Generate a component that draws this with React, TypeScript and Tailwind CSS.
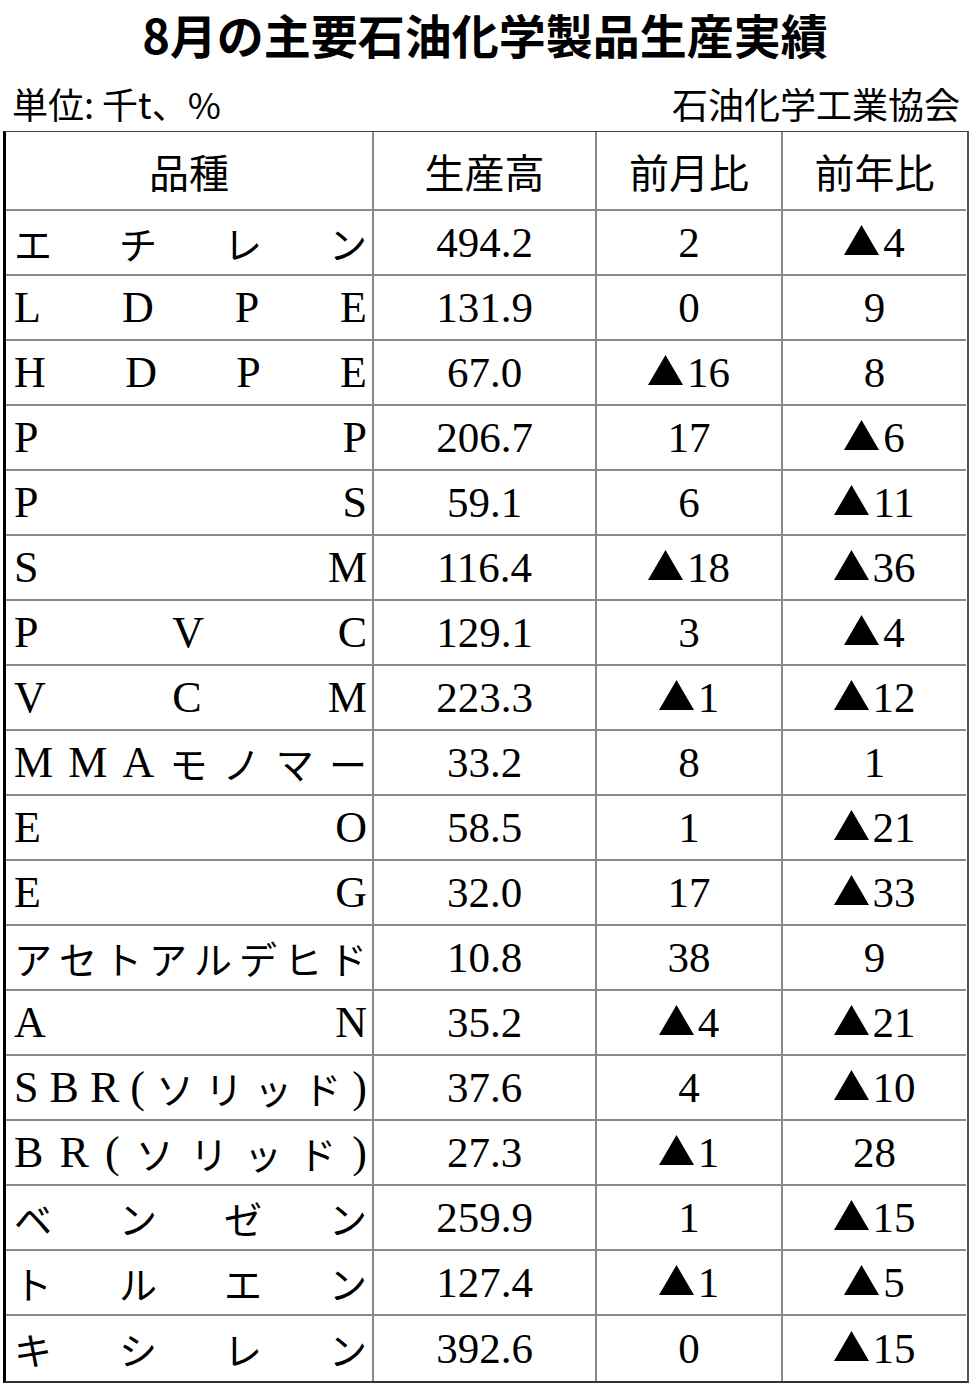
import React from 'react';

const rows: [string[], string, string, string][] = [
    [['エ', 'チ', 'レ', 'ン'], '494.2', '2', '▲4'],
    [['L', 'D', 'P', 'E'], '131.9', '0', '9'],
    [['H', 'D', 'P', 'E'], '67.0', '▲16', '8'],
    [['P', 'P'], '206.7', '17', '▲6'],
    [['P', 'S'], '59.1', '6', '▲11'],
    [['S', 'M'], '116.4', '▲18', '▲36'],
    [['P', 'V', 'C'], '129.1', '3', '▲4'],
    [['V', 'C', 'M'], '223.3', '▲1', '▲12'],
    [['M', 'M', 'A', 'モ', 'ノ', 'マ', 'ー'], '33.2', '8', '1'],
    [['E', 'O'], '58.5', '1', '▲21'],
    [['E', 'G'], '32.0', '17', '▲33'],
    [['ア', 'セ', 'ト', 'ア', 'ル', 'デ', 'ヒ', 'ド'], '10.8', '38', '9'],
    [['A', 'N'], '35.2', '▲4', '▲21'],
    [['S', 'B', 'R', '(', 'ソ', 'リ', 'ッ', 'ド', ')'], '37.6', '4', '▲10'],
    [['B', 'R', '(', 'ソ', 'リ', 'ッ', 'ド', ')'], '27.3', '▲1', '28'],
    [['ベ', 'ン', 'ゼ', 'ン'], '259.9', '1', '▲15'],
    [['ト', 'ル', 'エ', 'ン'], '127.4', '▲1', '▲5'],
    [['キ', 'シ', 'レ', 'ン'], '392.6', '0', '▲15'],
];

const serif = "font-['Liberation_Serif',serif]";
const jp = "font-['Noto_Sans_CJK_JP',sans-serif]";

// 負の値は▲を前につける
const Value = ({ v }: { v: string }) => {
    const neg = v.startsWith('▲');
    const num = neg ? v.slice(1) : v;
    return (
        <span className="inline-flex items-end">
            {neg && (
                <svg width="35" height="30" viewBox="0 0 35 30" className="mr-[4px] mb-[9px]">
                    <polygon points="17.5,0 35,30 0,30" fill="#000" />
                </svg>
            )}
            <span className={`${serif} text-[43px] leading-none`}>{num}</span>
        </span>
    );
};

const App: React.FC = () => {
    return (
        <div className="w-[970px] h-[1383px] bg-white text-black overflow-hidden">
            <h1 className={`text-center ${jp} font-bold text-[47px] leading-[68px] m-0`}>
                8月の主要石油化学製品生産実績
            </h1>
            <div className={`h-[63px] flex items-center justify-between pl-[12px] pr-[10px] ${jp} text-[36px] leading-[44px] pt-[6px]`}>
                <span>単位: 千t、%</span>
                <span>石油化学工業協会</span>
            </div>

            <div className="ml-[3px] w-[966px] border-l-[3px] border-l-black border-t border-t-[#444] border-r-2 border-r-[#555] border-b-2 border-b-[#333] grid grid-cols-[368px_223px_186px_183px]">
                {['品種', '生産高', '前月比', '前年比'].map((h, i) => (
                    <div
                        key={h}
                        className={`h-[79px] flex items-center justify-center border-b-2 border-b-[#8a8a8a] ${i < 3 ? 'border-r-2 border-r-[#8a8a8a]' : ''} ${jp} text-[40px] leading-none`}
                    >
                        {h}
                    </div>
                ))}

                {rows.map(([name, prod, mom, yoy], r) => {
                    const last = r === rows.length - 1;
                    const bb = last ? '' : 'border-b-2 border-b-[#8a8a8a]';
                    return (
                        <React.Fragment key={r}>
                            <div className={`h-[65px] flex items-center justify-between pl-[8px] pr-[5px] border-r-2 border-r-[#8a8a8a] ${bb}`}>
                                {name.map((c, k) => (
                                    <span
                                        key={k}
                                        className={/[A-Z()]/.test(c) ? `${serif} text-[44px] leading-none` : `${jp} text-[38px] leading-none`}
                                    >
                                        {c}
                                    </span>
                                ))}
                            </div>
                            <div className={`h-[65px] flex items-center justify-center border-r-2 border-r-[#8a8a8a] ${bb}`}>
                                <Value v={prod} />
                            </div>
                            <div className={`h-[65px] flex items-center justify-center border-r-2 border-r-[#8a8a8a] ${bb}`}>
                                <Value v={mom} />
                            </div>
                            <div className={`h-[65px] flex items-center justify-center ${bb}`}>
                                <Value v={yoy} />
                            </div>
                        </React.Fragment>
                    );
                })}
            </div>
        </div>
    );
};

export default App;
